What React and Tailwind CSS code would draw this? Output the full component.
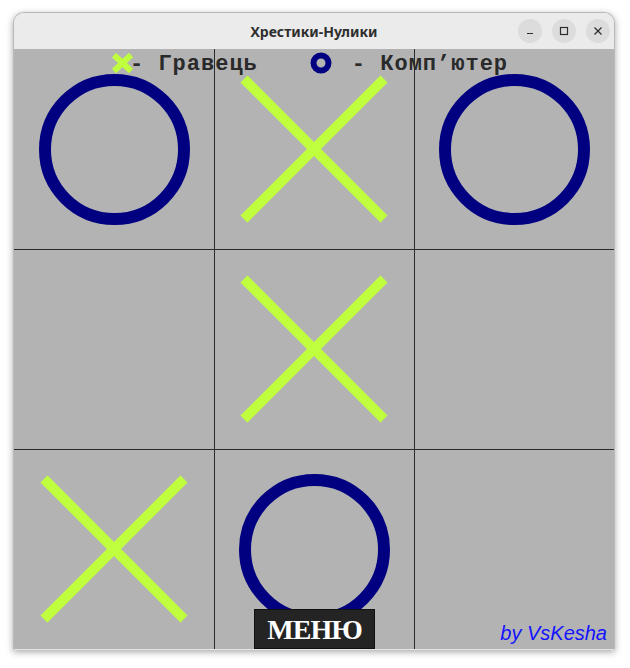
import React from "react";

const BOARD = ["O", "X", "O", "", "X", "", "X", "O", ""];

function Cross() {
  return (
    <svg width="200" height="200" viewBox="0 0 200 200">
      <line x1="30" y1="30" x2="170" y2="170" stroke="#c0ff3e" strokeWidth="10" />
      <line x1="170" y1="30" x2="30" y2="170" stroke="#c0ff3e" strokeWidth="10" />
    </svg>
  );
}

function Nought() {
  return (
    <svg width="200" height="200" viewBox="0 0 200 200">
      <circle cx="100.5" cy="100.5" r="69.5" fill="none" stroke="#000080" strokeWidth="12" />
    </svg>
  );
}

function WinButton({ children }) {
  return (
    <div className="w-6 h-6 rounded-full bg-[#dcdcdc] flex items-center justify-center">
      <svg width="10" height="10" viewBox="0 0 10 10" fill="none" stroke="#2e2e2e" strokeWidth="1.2">
        {children}
      </svg>
    </div>
  );
}

export default function App() {
  return (
    <div className="w-[630px] h-[668px] bg-white pt-[12px] pl-[13px]">
      <div className="w-[602px] rounded-t-[11px] border border-[#b9b9b9] border-b-[#e4e4e4] shadow-[0_2px_7px_rgba(0,0,0,0.35)] overflow-hidden">
        {/* title bar */}
        <div className="h-[36px] bg-[#ebebeb] relative flex items-center justify-center">
          <span
            className="text-[14px] font-bold text-[#2e2e2e]"
            style={{ fontFamily: '"Noto Sans", sans-serif' }}
          >
            Хрестики-Нулики
          </span>
          <div className="absolute right-[4px] top-[6px] flex gap-[10px]">
            <WinButton>
              <line x1="2" y1="7.5" x2="8" y2="7.5" />
            </WinButton>
            <WinButton>
              <rect x="1.5" y="1.5" width="7" height="7" />
            </WinButton>
            <WinButton>
              <line x1="1.5" y1="1.5" x2="8.5" y2="8.5" />
              <line x1="8.5" y1="1.5" x2="1.5" y2="8.5" />
            </WinButton>
          </div>
        </div>

        {/* board */}
        <div className="relative w-[600px] h-[600px] bg-[#b3b3b3]">
          <div className="grid grid-cols-[repeat(3,200px)] grid-rows-[repeat(3,200px)]">
            {BOARD.map((v, i) => (
              <div
                key={i}
                className={[
                  "w-[200px] h-[200px] border-[#2b2b2b]",
                  i % 3 !== 0 ? "border-l" : "",
                  i >= 3 ? "border-t" : "",
                ].join(" ")}
              >
                <div className={i % 3 !== 0 ? "-ml-px" : ""}>
                  <div className={i >= 3 ? "-mt-px" : ""}>
                    {v === "X" && <Cross />}
                    {v === "O" && <Nought />}
                  </div>
                </div>
              </div>
            ))}
          </div>

          {/* legend */}
          <div
            className="absolute top-[2px] left-0 h-[27px] flex items-center text-[22px] font-bold text-[#2a2a2a] tracking-[1px]"
            style={{ fontFamily: '"Liberation Mono", monospace' }}
          >
            <svg className="ml-[97px] -mt-[3px]" width="23" height="20" viewBox="0 0 23 20">
              <line x1="3" y1="2" x2="20" y2="18" stroke="#c0ff3e" strokeWidth="6" />
              <line x1="20" y1="2" x2="3" y2="18" stroke="#c0ff3e" strokeWidth="6" />
            </svg>
            <span className="ml-[-4px] leading-none">- Гравець</span>
            <svg className="ml-[52px] -mt-[3px]" width="22" height="22" viewBox="0 0 22 22">
              <circle cx="11" cy="11" r="7.5" fill="none" stroke="#000080" strokeWidth="6" />
            </svg>
            <span className="ml-[20px] leading-none">- Комп’ютер</span>
          </div>

          {/* menu button */}
          <div
            className="absolute left-[240px] bottom-0 w-[121px] h-[40px] bg-[#242424] border border-[#111] flex items-center justify-center text-white text-[28px] font-bold leading-none pt-[2px] tracking-[-1px]"
            style={{ fontFamily: '"Liberation Serif", serif' }}
          >
            МЕНЮ
          </div>

          {/* author */}
          <div
            className="absolute right-[7px] bottom-[3px] text-[20px] italic text-[#1414ff] leading-[26px]"
            style={{ fontFamily: '"Liberation Sans", sans-serif' }}
          >
            by VsKesha
          </div>
        </div>
      </div>
    </div>
  );
}
